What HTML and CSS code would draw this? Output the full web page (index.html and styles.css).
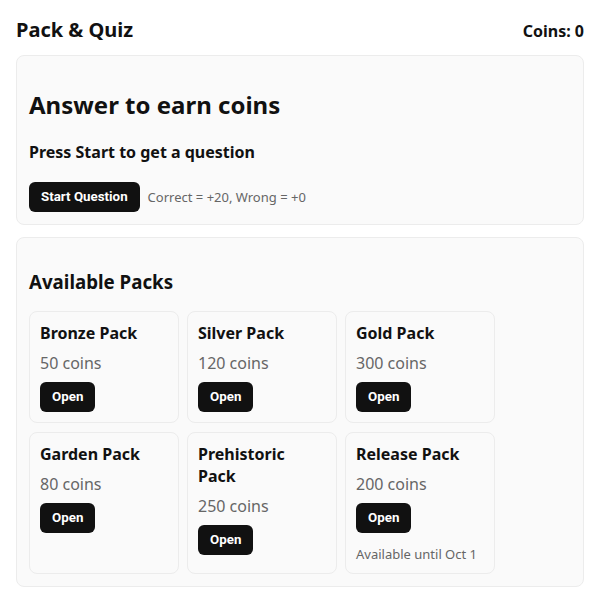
FILE: index.html
```html
<!DOCTYPE html>
<html>
<head>
<meta charset="utf-8">
<link rel="stylesheet" href="styles.css">
</head>
<body>
<div class="page">
  <header class="topbar">
    <div class="brand">Pack &amp; Quiz</div>
    <div class="coins">Coins: 0</div>
  </header>
  <section class="card">
    <h2 class="quiz-title">Answer to earn coins</h2>
    <h4 class="quiz-question">Press Start to get a question</h4>
    <div class="quiz-actions">
      <button class="btn">Start Question</button>
      <span class="hint">Correct = +20, Wrong = +0</span>
    </div>
  </section>
  <section class="card">
    <h3 class="packs-title">Available Packs</h3>
    <div class="pack-grid">
      <div class="pack"><div class="pack-name">Bronze Pack</div><div class="pack-price">50 coins</div><div><button class="btn">Open</button></div></div>
      <div class="pack"><div class="pack-name">Silver Pack</div><div class="pack-price">120 coins</div><div><button class="btn">Open</button></div></div>
      <div class="pack"><div class="pack-name">Gold Pack</div><div class="pack-price">300 coins</div><div><button class="btn">Open</button></div></div>
      <div class="pack"><div class="pack-name">Garden Pack</div><div class="pack-price">80 coins</div><div><button class="btn">Open</button></div></div>
      <div class="pack"><div class="pack-name">Prehistoric Pack</div><div class="pack-price">250 coins</div><div><button class="btn">Open</button></div></div>
      <div class="pack"><div class="pack-name">Release Pack</div><div class="pack-price">200 coins</div><div><button class="btn">Open</button></div><div class="pack-note">Available until Oct 1</div></div>
    </div>
  </section>
</div>
</body>
</html>
```
FILE: styles.css
```css
* { box-sizing: border-box; }
html, body { margin: 0; padding: 0; background: #fff; }
body {
  font-family: "Noto Sans", "Open Sans", sans-serif;
  color: #111;
}
.page { padding: 16px; }
.topbar {
  display: flex;
  justify-content: space-between;
  align-items: baseline;
  margin-bottom: 12px;
}
.brand { font-size: 20px; font-weight: 700; }
.coins { font-size: 16px; font-weight: 700; }
.card {
  background: #fafafa;
  border: 1px solid #ececec;
  border-radius: 8px;
  padding: 12px;
  margin-bottom: 12px;
}
.quiz-title { font-size: 24px; font-weight: 700; margin: 20px 0 20px; }
.quiz-question { font-size: 16px; font-weight: 700; margin: 0 0 19px; }
.quiz-actions { display: flex; align-items: center; gap: 8px; }
.btn {
  display: block;
  font-family: Roboto, "Noto Sans", sans-serif;
  font-size: 13.333px;
  font-weight: 700;
  line-height: 16px;
  color: #fff;
  background: #111;
  border: none;
  border-radius: 6px;
  padding: 7px 12px;
  cursor: pointer;
}
.hint { font-size: 13px; color: #666; }
.packs-title { font-size: 18.72px; font-weight: 700; margin: 19px 0 17px; }
.pack-grid {
  display: grid;
  grid-template-columns: repeat(3, 150px);
  gap: 9px 8px;
}
.pack {
  background: #fafafa;
  border: 1px solid #ececec;
  border-radius: 8px;
  padding: 10px;
  display: flex;
  flex-direction: column;
  gap: 8px;
}
.pack-name { font-size: 16px; font-weight: 700; }
.pack-price { font-size: 16px; color: #666; }
.pack-note { font-size: 13px; color: #666; margin-top: 4px; }
```
